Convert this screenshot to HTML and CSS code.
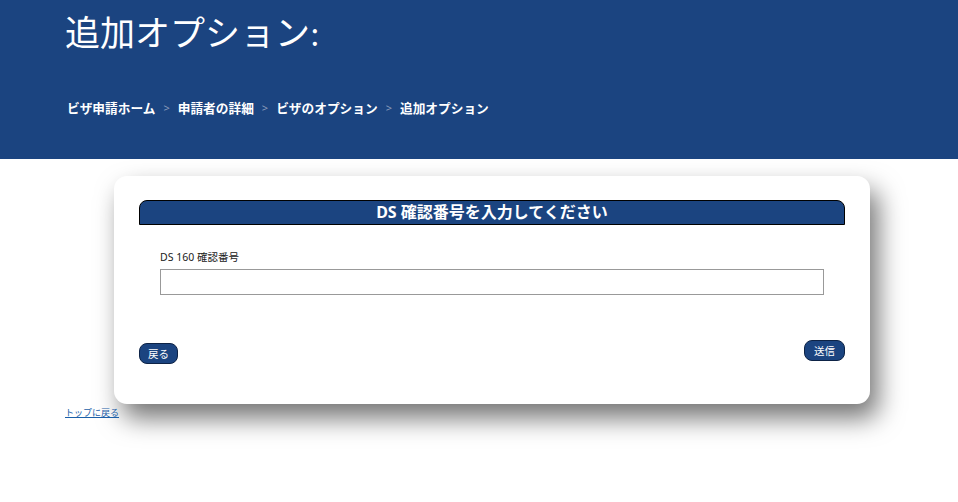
FILE: index.html
```html
<!DOCTYPE html>
<html lang="ja">

<head>
    <meta charset="UTF-8">
    <meta name="viewport" content="width=device-width, initial-scale=1.0">
    <title>追加オプション</title>
    <link rel="stylesheet" href="styles.css">
</head>

<body>
    <div class="header">
        <h1 class="page-title">追加オプション:</h1>
        <div class="breadcrumb">
            <a href="#">ビザ申請ホーム</a>
            <span class="sep">&gt;</span>
            <a href="#">申請者の詳細</a>
            <span class="sep">&gt;</span>
            <a href="#">ビザのオプション</a>
            <span class="sep">&gt;</span>
            <span class="current">追加オプション</span>
        </div>
    </div>

    <div class="content">
        <div class="card">
            <h2 class="card-heading">DS 確認番号を入力してください</h2>
            <div class="field">
                <label for="ds160">DS 160 確認番号</label>
                <input type="text" id="ds160" name="ds160">
            </div>
            <div class="actions">
                <button class="btn btn-back">戻る</button>
                <button class="btn btn-submit">送信</button>
            </div>
        </div>
        <a href="#" class="top-link">トップに戻る</a>
    </div>
</body>

</html>
```

FILE: styles.css
```css
body {
    margin: 0;
    padding: 0;
    font-family: "Noto Sans", "Noto Sans CJK JP", sans-serif;
    background: white;
    color: #222;
}

.header {
    background-color: #1b4480;
    height: 159px;
    padding: 0 65px;
    box-sizing: border-box;
    overflow: hidden;
}

.page-title {
    margin: 0;
    padding-top: 12px;
    font-family: "Liberation Serif", "Noto Sans CJK JP", serif;
    font-weight: normal;
    font-size: 35px;
    line-height: 46px;
    color: white;
}

.breadcrumb {
    margin-top: 40px;
    padding-left: 2px;
    font-size: 12.7px;
    font-weight: bold;
    color: white;
    display: flex;
    align-items: center;
    gap: 8px;
}

.breadcrumb a {
    color: white;
    text-decoration: none;
}

.breadcrumb .sep {
    color: #8a9bbb;
    font-size: 11px;
    font-weight: normal;
}

.content {
    padding: 17px 65px 40px;
}

.card {
    width: 756px;
    margin-left: 49px;
    box-sizing: border-box;
    background: white;
    border-radius: 13px;
    padding: 24px 25px 40px 25px;
    box-shadow: 8px 14px 26px rgba(0, 0, 0, 0.55);
}

.card-heading {
    margin: 0;
    background-color: #1b4480;
    border: 1px solid #000;
    border-radius: 8px 8px 0 0;
    color: white;
    font-size: 16px;
    font-weight: bold;
    line-height: 23px;
    text-align: center;
}

.field {
    padding: 24px 21px 0 21px;
}

.field label {
    display: block;
    font-size: 10.5px;
    color: #222;
    margin-bottom: 5px;
}

.field input {
    display: block;
    width: 100%;
    height: 26px;
    border: 1px solid #999;
    box-sizing: border-box;
}

.actions {
    display: flex;
    justify-content: space-between;
    align-items: flex-start;
    margin-top: 45px;
}

.btn {
    background-color: #1b4480;
    color: white;
    border: 1px solid #0d2346;
    border-radius: 8px;
    font-family: "Noto Sans", "Noto Sans CJK JP", sans-serif;
    font-size: 10.5px;
    padding: 2px 9px;
    cursor: pointer;
}

.btn-back {
    margin-top: 3px;
    padding: 2px 8px;
}

.top-link {
    display: block;
    width: fit-content;
    margin-top: 3px;
    font-size: 9px;
    line-height: 1.3;
    color: #1b5fa8;
}
```
